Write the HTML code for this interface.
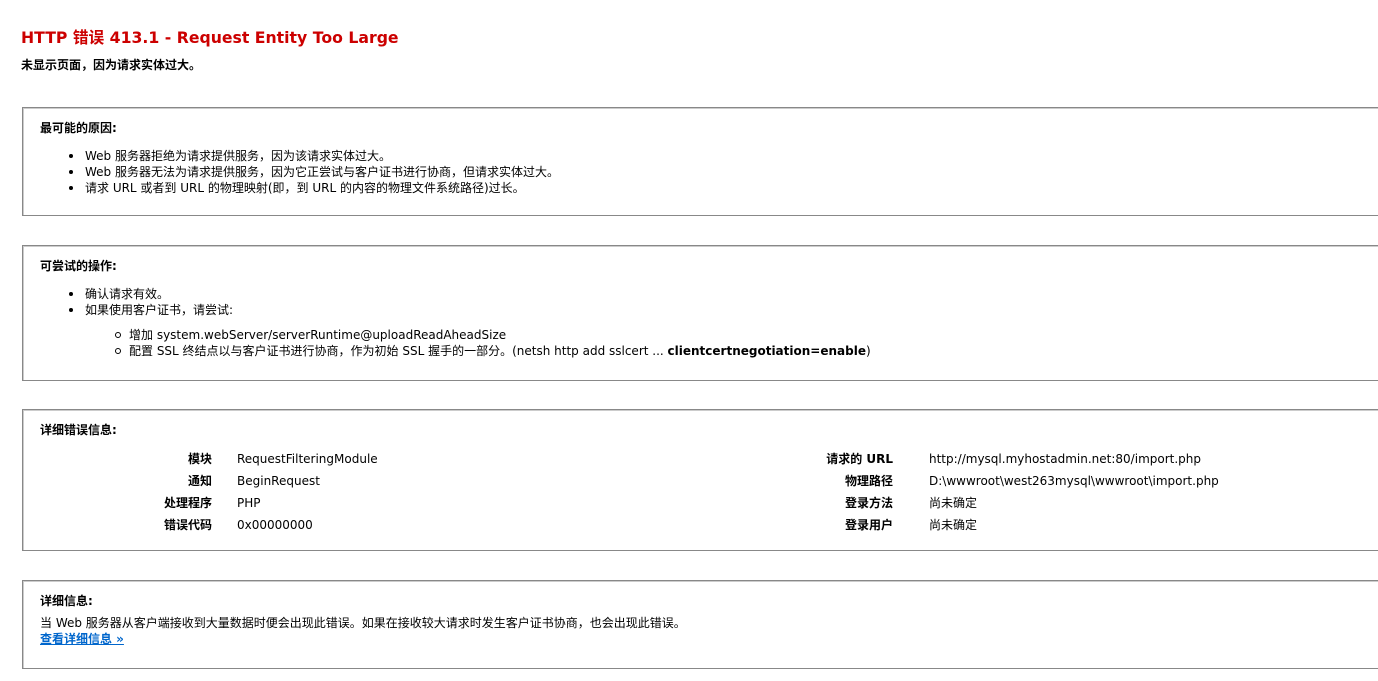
<!DOCTYPE html>
<html><head><meta charset="utf-8"><style>
body{margin:0;background:#fff;width:1378px;height:681px;overflow:hidden;position:relative;font-family:"DejaVu Sans","Noto Sans CJK SC",sans-serif;font-size:12px;color:#000}
.a{position:absolute;white-space:nowrap;line-height:16px}
.b{font-weight:bold}
.box{position:absolute;left:22px;width:1400px;border:1px solid #888;box-shadow:inset 1px 1px 0 #ccc;}
.dot{position:absolute;width:4px;height:4px;background:#000;border-radius:50%}
.circ{position:absolute;width:4px;height:4px;border:1px solid #000;border-radius:50%}
.r{text-align:right}
</style></head><body>
<div class="a b" style="left:21px;top:28px;font-size:15.7px;line-height:20px;color:#cc0000">HTTP 错误 413.1 - Request Entity Too Large</div>
<div class="a b" style="left:21px;top:57px">未显示页面，因为请求实体过大。</div>

<div class="box" style="top:107px;height:107px"></div>
<div class="a b" style="left:40px;top:120px">最可能的原因:</div>
<div class="dot" style="left:69px;top:154px"></div><div class="a" style="left:85px;top:148px">Web 服务器拒绝为请求提供服务，因为该请求实体过大。</div>
<div class="dot" style="left:69px;top:170px"></div><div class="a" style="left:85px;top:164px">Web 服务器无法为请求提供服务，因为它正尝试与客户证书进行协商，但请求实体过大。</div>
<div class="dot" style="left:69px;top:186px"></div><div class="a" style="left:85px;top:180px">请求 URL 或者到 URL 的物理映射(即，到 URL 的内容的物理文件系统路径)过长。</div>

<div class="box" style="top:245px;height:134px"></div>
<div class="a b" style="left:40px;top:258px">可尝试的操作:</div>
<div class="dot" style="left:69px;top:292px"></div><div class="a" style="left:85px;top:286px">确认请求有效。</div>
<div class="dot" style="left:69px;top:308px"></div><div class="a" style="left:85px;top:302px">如果使用客户证书，请尝试:</div>
<div class="circ" style="left:115px;top:332px"></div><div class="a" style="left:129px;top:327px">增加 system.webServer/serverRuntime@uploadReadAheadSize</div>
<div class="circ" style="left:115px;top:348px"></div><div class="a" style="left:129px;top:343px">配置 SSL 终结点以与客户证书进行协商，作为初始 SSL 握手的一部分。(netsh http add sslcert ... <b>clientcertnegotiation=enable</b>)</div>

<div class="box" style="top:409px;height:140px"></div>
<div class="a b" style="left:40px;top:422px">详细错误信息:</div>
<div class="a b r" style="right:1166px;top:451px">模块</div><div class="a" style="left:237px;top:451px">RequestFilteringModule</div>
<div class="a b r" style="right:1166px;top:473px">通知</div><div class="a" style="left:237px;top:473px">BeginRequest</div>
<div class="a b r" style="right:1166px;top:495px">处理程序</div><div class="a" style="left:237px;top:495px">PHP</div>
<div class="a b r" style="right:1166px;top:517px">错误代码</div><div class="a" style="left:237px;top:517px">0x00000000</div>
<div class="a b r" style="right:485px;top:451px">请求的 URL</div><div class="a" style="left:929px;top:451px">http://mysql.myhostadmin.net:80/import.php</div>
<div class="a b r" style="right:485px;top:473px">物理路径</div><div class="a" style="left:929px;top:473px">D:\wwwroot\west263mysql\wwwroot\import.php</div>
<div class="a b r" style="right:485px;top:495px">登录方法</div><div class="a" style="left:929px;top:495px">尚未确定</div>
<div class="a b r" style="right:485px;top:517px">登录用户</div><div class="a" style="left:929px;top:517px">尚未确定</div>

<div class="box" style="top:580px;height:87px"></div>
<div class="a b" style="left:40px;top:593px">详细信息:</div>
<div class="a" style="left:40px;top:615px">当 Web 服务器从客户端接收到大量数据时便会出现此错误。如果在接收较大请求时发生客户证书协商，也会出现此错误。</div>
<div class="a b" style="left:40px;top:631px;color:#0066cc;text-decoration:underline">查看详细信息 »</div>
</body></html>
